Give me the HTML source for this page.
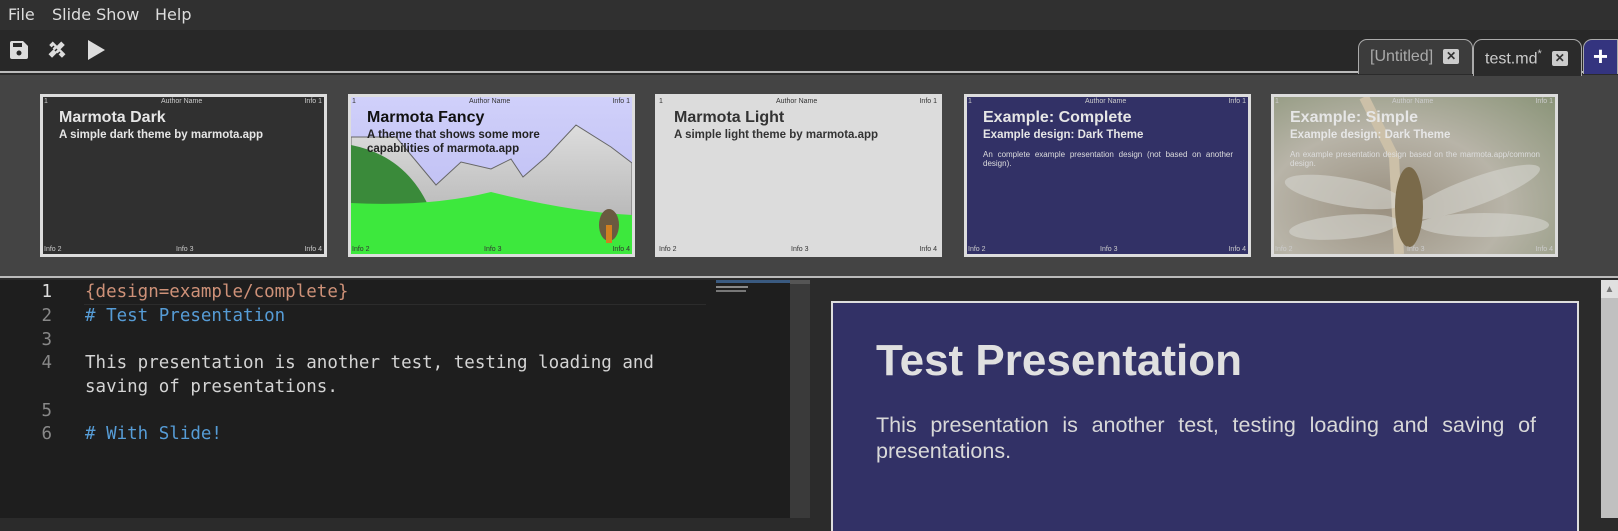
<!DOCTYPE html>
<html><head><meta charset="utf-8"><style>
*{margin:0;padding:0;box-sizing:border-box}
body{width:1618px;height:518px;overflow:hidden;background:#2b2b2b;font-family:"Liberation Sans",sans-serif;position:relative}
.abs{position:absolute}
#menu{left:0;top:0;width:1618px;height:30px;background:#303030;color:#ddd;font-family:"DejaVu Sans",sans-serif;font-size:16px}
#menu span{position:absolute;top:5px}
#tool{left:0;top:30px;width:1618px;height:43px;background:#282828;border-bottom:2px solid #bbb;z-index:2}
#strip{left:0;top:75px;width:1618px;height:203px;background:#444;border-bottom:2px solid #bbb}
.th{position:absolute;top:94px;width:287px;height:163px;border:3px solid #ddd;overflow:hidden}
.th .s{position:absolute;font-size:7px;color:#ccc}
.th h1{position:absolute;left:16px;top:12px;font-size:16px;font-weight:bold;color:#e6e6e6}
.th h2{position:absolute;left:16px;top:31px;font-size:11.5px;font-weight:bold;color:#e6e6e6;line-height:14px;width:210px}
.th p{position:absolute;left:16px;top:53px;font-size:8px;color:#ddd;width:250px;line-height:9px;text-align:justify}
#ed{left:0;top:280px;width:790px;height:238px;background:#1e1e1e;font-family:"DejaVu Sans Mono",monospace;font-size:17.5px}
.ln{position:absolute;left:0;width:52px;text-align:right;color:#888}
.cd{position:absolute;left:85px;color:#d4d4d4;white-space:pre}
#pv{left:810px;top:280px;width:790px;height:238px;background:#2b2b2b}
.tab{position:absolute;top:9px;height:35px;border:1px solid #aaa;border-bottom:none;border-radius:9px 9px 0 0;font-size:16px;color:#aaa;padding:8px 0 0 11px}
.x{display:inline-block;width:16px;height:15px;background:#ccc;color:#333;font-size:12px;font-weight:bold;text-align:center;line-height:15px;border-radius:2px;vertical-align:1px;margin-left:10px}
</style></head><body>
<div id="menu" class="abs"><span style="left:8px">File</span><span style="left:52px">Slide Show</span><span style="left:155px">Help</span></div>
<div id="tool" class="abs">
<svg class="abs" style="left:9px;top:10px" width="20" height="20" viewBox="0 0 20 20"><path d="M1 3a2 2 0 0 1 2-2h11l5 5v11a2 2 0 0 1-2 2H3a2 2 0 0 1-2-2z" fill="#ddd"/><rect x="4" y="3" width="9" height="4" fill="#282828"/><circle cx="10" cy="13" r="2.5" fill="#282828"/></svg>
<svg class="abs" style="left:46px;top:9px" width="22" height="22" viewBox="0 0 22 22"><g fill="#ddd"><rect x="2" y="8" width="18" height="5" transform="rotate(45 11 11)"/><rect x="2" y="8" width="18" height="5" transform="rotate(-45 11 11)"/></g><g stroke="#282828" stroke-width="1.5"><path d="M6 9l2-2M9 12l2-2M12 15l2-2"/></g></svg>
<svg class="abs" style="left:86px;top:9px" width="20" height="22" viewBox="0 0 20 22"><path d="M2 1l17 10L2 21z" fill="#ddd"/></svg>
<div class="tab" style="left:1358px;width:115px;background:#3c3c3c">[Untitled]<span class="x">✕</span></div>
<div class="tab" style="left:1473px;width:109px;background:#2b2b2b;color:#ccc;height:37px">test.md<sup style="font-size:11px">*</sup><span class="x">✕</span></div>
<div class="abs" style="left:1583px;top:9px;width:35px;height:35px;background:#34347f;border:1px solid #aaa;border-bottom:none;border-radius:9px 0 0 0;color:#fff;font-size:26px;font-weight:bold;text-align:center;line-height:32px">+</div>
</div>
<div id="strip" class="abs"></div>

<div class="th" style="left:40px;background:#303030">
<span class="s" style="left:1px;top:1px">1</span><span class="s" style="left:118px;top:1px">Author Name</span><span class="s" style="right:2px;top:1px">Info 1</span>
<h1>Marmota Dark</h1><h2>A simple dark theme by marmota.app</h2>
<span class="s" style="left:1px;bottom:1px">Info 2</span><span class="s" style="left:133px;bottom:1px">Info 3</span><span class="s" style="right:2px;bottom:1px">Info 4</span></div>

<div class="th" style="left:348px;background:linear-gradient(#d0d0fa,#b8b8f0)">
<svg class="abs" style="left:0;top:0" width="281" height="157" viewBox="0 0 281 157"><defs><linearGradient id="m" x1="0" y1="0" x2="0" y2="1"><stop offset="0" stop-color="#ddd"/><stop offset="1" stop-color="#aaa"/></linearGradient></defs>
<path d="M0 40L45 40L85 88L110 65L140 72L160 62L172 80L195 60L225 28L260 50L281 66V157H0z" fill="url(#m)" stroke="#666"/>
<path d="M0 48Q60 60 82 120L0 140z" fill="#3a8a3a"/>
<path d="M0 106Q80 110 140 95Q220 115 281 118V157H0z" fill="#3de83d"/>
<ellipse cx="258" cy="128" rx="10" ry="16" fill="#6a5a40"/><rect x="255" y="128" width="6" height="18" fill="#d08020"/></svg>
<span class="s" style="left:1px;top:1px;color:#333">1</span><span class="s" style="left:118px;top:1px;color:#333">Author Name</span><span class="s" style="right:2px;top:1px;color:#333">Info 1</span>
<h1 style="color:#111">Marmota Fancy</h1><h2 style="color:#222">A theme that shows some more capabilities of marmota.app</h2>
<span class="s" style="left:1px;bottom:1px;color:#333">Info 2</span><span class="s" style="left:133px;bottom:1px;color:#333">Info 3</span><span class="s" style="right:2px;bottom:1px;color:#333">Info 4</span></div>

<div class="th" style="left:655px;background:#dcdcdc;border-color:#dcdcdc">
<span class="s" style="left:1px;top:1px;color:#333">1</span><span class="s" style="left:118px;top:1px;color:#333">Author Name</span><span class="s" style="right:2px;top:1px;color:#333">Info 1</span>
<h1 style="color:#333">Marmota Light</h1><h2 style="color:#333">A simple light theme by marmota.app</h2>
<span class="s" style="left:1px;bottom:1px;color:#333">Info 2</span><span class="s" style="left:133px;bottom:1px;color:#333">Info 3</span><span class="s" style="right:2px;bottom:1px;color:#333">Info 4</span></div>

<div class="th" style="left:964px;background:#323166">
<span class="s" style="left:1px;top:1px">1</span><span class="s" style="left:118px;top:1px">Author Name</span><span class="s" style="right:2px;top:1px">Info 1</span>
<h1>Example: Complete</h1><h2>Example design: Dark Theme</h2>
<p>An complete example presentation design (not based on another design).</p>
<span class="s" style="left:1px;bottom:1px">Info 2</span><span class="s" style="left:133px;bottom:1px">Info 3</span><span class="s" style="right:2px;bottom:1px">Info 4</span></div>

<div class="th" style="left:1271px;background:radial-gradient(ellipse at 40% 70%,#9a9080,#b8b4a8 50%,#8a9478)">
<svg class="abs" style="left:0;top:0" width="281" height="157" viewBox="0 0 281 157"><path d="M90 0L120 60L125 157" stroke="#ccc0a8" stroke-width="10" fill="none"/><g fill="#d6d6d0" opacity=".6"><ellipse cx="70" cy="95" rx="60" ry="14" transform="rotate(10 70 95)"/><ellipse cx="200" cy="95" rx="70" ry="14" transform="rotate(-20 200 95)"/><ellipse cx="70" cy="130" rx="55" ry="12" transform="rotate(-5 70 130)"/><ellipse cx="210" cy="128" rx="65" ry="12"/></g><ellipse cx="135" cy="110" rx="14" ry="40" fill="#7a6a4a"/></svg>
<span class="s" style="left:1px;top:1px">1</span><span class="s" style="left:118px;top:1px">Author Name</span><span class="s" style="right:2px;top:1px">Info 1</span>
<h1>Example: Simple</h1><h2>Example design: Dark Theme</h2>
<p>An example presentation design based on the marmota.app/common design.</p>
<span class="s" style="left:1px;bottom:1px">Info 2</span><span class="s" style="left:133px;bottom:1px">Info 3</span><span class="s" style="right:2px;bottom:1px">Info 4</span></div>

<div id="ed" class="abs">
<div class="abs" style="left:84px;top:3px;width:622px;height:22px;border-bottom:1px solid #2c2c2c"></div>
<div class="ln" style="top:2px;color:#ddd">1</div><div class="cd" style="top:2px;color:#ce9178">{design=example/complete}</div>
<div class="ln" style="top:26px">2</div><div class="cd" style="top:26px;color:#569cd6"># Test Presentation</div>
<div class="ln" style="top:50px">3</div>
<div class="ln" style="top:73px">4</div><div class="cd" style="top:73px">This presentation is another test, testing loading and</div>
<div class="cd" style="top:97px">saving of presentations.</div>
<div class="ln" style="top:121px">5</div>
<div class="ln" style="top:144px">6</div><div class="cd" style="top:144px;color:#569cd6"># With Slide!</div>
<div class="abs" style="left:716px;top:0;width:74px;height:3px;background:#3a5a80"></div>
<div class="abs" style="left:716px;top:6px;width:32px;height:2px;background:#888"></div>
<div class="abs" style="left:716px;top:10px;width:30px;height:2px;background:#777"></div>
<div class="abs" style="left:790px;top:0;width:20px;height:238px;background:#3a3a3a"></div>
<div class="abs" style="left:790px;top:0;width:20px;height:4px;background:#555"></div>
</div>
<div id="pv" class="abs"></div>
<div class="abs" style="left:1600px;top:280px;width:18px;height:238px;background:#2e2e2e"><div class="abs" style="left:1px;top:0;width:17px;height:238px;background:#c0c0c0"></div><div class="abs" style="left:1px;top:0;width:17px;height:18px;background:#e0e0e0;color:#777;font-size:10px;text-align:center;line-height:20px">▲</div></div>
<div class="abs" style="left:831px;top:301px;width:748px;height:230px;background:#323166;border:2px solid #ddd;border-bottom:none">
<div class="abs" style="left:43px;top:33px;font-size:44px;font-weight:bold;color:#e0e0e0">Test Presentation</div>
<div class="abs" style="left:43px;top:109px;width:660px;font-size:21.5px;color:#d8d8d8;line-height:26px;text-align:justify">This presentation is another test, testing loading and saving of presentations.</div>
</div>
</body></html>
